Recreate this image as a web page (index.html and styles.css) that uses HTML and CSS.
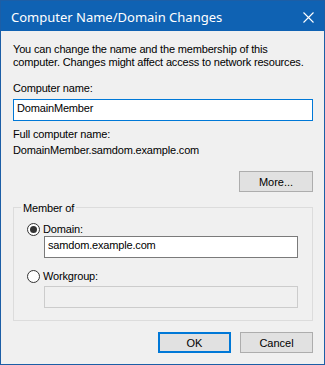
FILE: index.html
```html
<!DOCTYPE html>
<html>
<head>
<meta charset="utf-8">
<link rel="stylesheet" href="styles.css">
</head>
<body>
<div class="window">
  <div class="titlebar">
    <span class="title">Computer Name/Domain Changes</span>
    <svg class="close" width="11" height="11" viewBox="0 0 11 11"><path d="M0.5 0.5 L10.5 10.5 M10.5 0.5 L0.5 10.5" stroke="#fff" stroke-width="1.1" fill="none"/></svg>
  </div>
  <div class="content">
    <p class="desc">You can change the name and the membership of this computer. Changes might affect access to network resources.</p>
    <div class="label cname">Computer name:</div>
    <div class="input focused">DomainMember</div>
    <div class="label fullname">Full computer name:</div>
    <div class="label fullval">DomainMember.samdom.example.com</div>
    <div class="more-row"><div class="btn">More...</div></div>
    <fieldset class="group">
      <legend>Member of</legend>
      <div class="radio-row"><span class="radio checked"></span><span>Domain:</span></div>
      <div class="input sub">samdom.example.com</div>
      <div class="radio-row second"><span class="radio"></span><span>Workgroup:</span></div>
      <div class="input sub disabled"></div>
    </fieldset>
    <div class="buttons">
      <div class="btn default">OK</div>
      <div class="btn">Cancel</div>
    </div>
  </div>
</div>
</body>
</html>
```
FILE: styles.css
```css
html, body {
  margin: 0;
  padding: 0;
}
body {
  width: 325px;
  height: 365px;
  font-family: "Liberation Sans", Arial, sans-serif;
  font-size: 11px;
  letter-spacing: -0.17px;
  color: #000;
}
.window {
  width: 325px;
  height: 365px;
  box-sizing: border-box;
  border: 1px solid #1c5ea6;
  background: #f0f0f0;
  display: flex;
  flex-direction: column;
}
.titlebar {
  height: 30px;
  background: #0f62b3;
  color: #fff;
  display: flex;
  align-items: center;
  justify-content: space-between;
  padding: 0 10px 0 10px;
  flex: none;
  letter-spacing: 0;
}
.title {
  font-family: "Noto Sans", sans-serif;
  font-size: 13px;
  padding-top: 1px;
}
.close {
  display: block;
  margin-top: 2px;
}
.content {
  padding: 0 11px 0 12px;
  display: flex;
  flex-direction: column;
}
.desc {
  margin: 12px 0 0 0;
  line-height: 13px;
}
.label {
  line-height: 13px;
}
.cname {
  margin-top: 13px;
}
.input {
  height: 22px;
  box-sizing: border-box;
  border: 1px solid #7a7a7a;
  background: #fff;
  padding: 0 3px;
  line-height: 16px;
  margin-top: 4px;
}
.input.focused {
  border-color: #0078d7;
}
.fullname {
  margin-top: 7px;
}
.fullval {
  margin-top: 3px;
}
.more-row {
  display: flex;
  justify-content: flex-end;
  margin-top: 14px;
}
.btn {
  width: 74px;
  height: 21px;
  box-sizing: border-box;
  border: 1px solid #adadad;
  background: #e1e1e1;
  display: flex;
  align-items: center;
  justify-content: center;
  letter-spacing: 0;
}
.btn.default {
  border: 2px solid #0078d7;
  width: 73px;
}
.buttons .btn {
  width: 73px;
}
.group {
  margin: 8px 0 0 0;
  padding: 7px 14px 12px 13px;
  border: 1px solid #dcdcdc;
  min-width: 0;
}
.group legend {
  padding: 2px 2px 0 2px;
  margin-left: -6px;
  line-height: 13px;
}
.radio-row {
  display: flex;
  align-items: center;
  gap: 3px;
  height: 14px;
}
.radio-row.second {
  margin-top: 11px;
}
.radio {
  width: 11px;
  height: 11px;
  border: 1px solid #333;
  border-radius: 50%;
  background: #fff;
  position: relative;
  flex: none;
}
.radio.checked::after {
  content: "";
  position: absolute;
  left: 2px;
  top: 2px;
  width: 7px;
  height: 7px;
  border-radius: 50%;
  background: #333;
}
.input.sub {
  margin-left: 17px;
  margin-top: 0;
}
.input.disabled {
  border-color: #cccccc;
  background: #f0f0f0;
  margin-top: 3px;
}
.buttons {
  display: flex;
  justify-content: flex-end;
  gap: 9px;
  margin-top: 11px;
}
```
